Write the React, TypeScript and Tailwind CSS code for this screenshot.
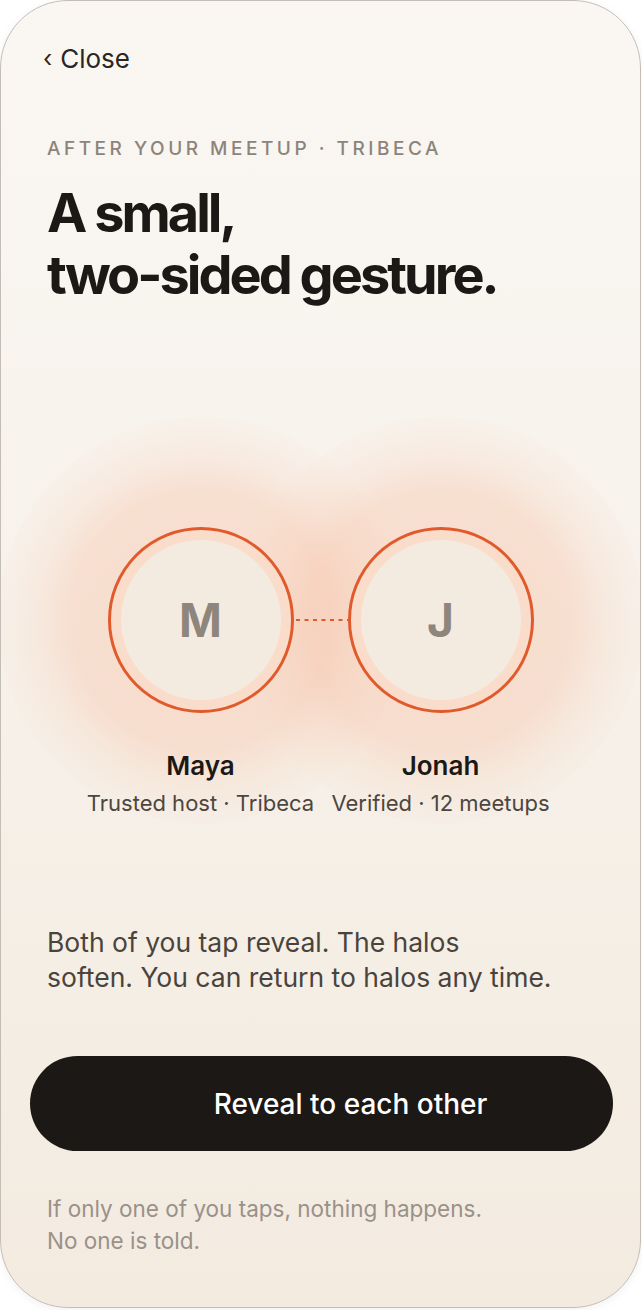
const PEOPLE = [
  { initial: 'M', name: 'Maya', sub: 'Trusted host · Tribeca' },
  { initial: 'J', name: 'Jonah', sub: 'Verified · 12 meetups' },
];

function Halo({ initial }: { initial: string }) {
  return (
    <div className="relative w-[186px] h-[186px] rounded-full">
      <div className="absolute -z-10 inset-[-110px] rounded-full bg-[radial-gradient(circle,rgba(247,190,162,0.4)_0%,rgba(247,190,162,0.36)_45%,rgba(247,196,170,0.2)_56%,rgba(248,210,190,0.08)_68%,rgba(248,222,206,0.02)_80%,rgba(248,225,210,0)_90%)]" />
      <div className="relative w-full h-full rounded-full border-[3px] border-[#e15a2c] bg-[#fadccb] flex items-center justify-center">
        <div className="w-[160px] h-[160px] rounded-full bg-[#f3ebe0] flex items-center justify-center">
          <span className="text-[46px] font-bold text-[#8e867c] leading-none">{initial}</span>
        </div>
      </div>
    </div>
  );
}

export default function App() {
  return (
    <div className="w-[642px] h-[1310px] bg-white" style={{ fontFamily: "Inter, 'Noto Sans', sans-serif" }}>
      <div className="w-[641px] h-[1308px] rounded-[68px] border border-[#c4bdb6] bg-gradient-to-b from-[#faf7f3] to-[#f3ebe0] shadow-[0_2px_10px_rgba(0,0,0,0.06)] overflow-hidden flex flex-col">
        <div className="pt-[42px] px-[42px]">
          <button type="button" className="flex items-center gap-[8px] text-[26px] leading-[32px] text-[#2b2622]">
            <span className="text-[24px]">‹</span>
            <span>Close</span>
          </button>
        </div>

        <div className="px-[46px]">
          <p className="mt-[62px] text-[19px] leading-[24px] font-medium tracking-[0.185em] text-[#8c847a]">
            AFTER YOUR MEETUP · TRIBECA
          </p>
          <h1 className="mt-[21px] text-[54px] leading-[62px] font-bold tracking-[-0.055em] text-[#1c1815]">
            A small,
            <br />
            two-sided gesture.
          </h1>
        </div>

        <div className="isolate mt-[221px] flex items-center justify-center">
          <Halo initial="M" />
          <svg width="54" height="4" className="relative">
            <line x1="2" y1="2" x2="54" y2="2" stroke="#e15a2c" strokeWidth="2" strokeDasharray="4 4.5" />
          </svg>
          <Halo initial="J" />
        </div>

        <div className="relative mt-[37px] flex justify-center">
          {PEOPLE.map(p => (
            <div key={p.name} className="w-[240px] flex flex-col items-center">
              <p className="text-[26px] leading-[32px] font-semibold text-[#1c1815]">{p.name}</p>
              <p className="mt-[7px] text-[22px] leading-[28px] text-[#4d463f] whitespace-nowrap">{p.sub}</p>
            </div>
          ))}
        </div>

        <p className="mt-[108px] px-[46px] text-[26.5px] leading-[35px] text-[#4a433c]">
          Both of you tap reveal. The halos
          <br />
          soften. You can return to halos any time.
        </p>

        <div className="mt-[61px] pl-[29px] pr-[27px]">
          <button
            type="button"
            className="w-full h-[95px] rounded-full bg-[#1c1815] pl-[58px] flex items-center justify-center text-[28px] font-medium text-white"
          >
            Reveal to each other
          </button>
        </div>

        <p className="mt-[42px] px-[46px] text-[22.5px] leading-[32px] text-[#9a9189]">
          If only one of you taps, nothing happens.
          <br />
          No one is told.
        </p>
      </div>
    </div>
  );
}
